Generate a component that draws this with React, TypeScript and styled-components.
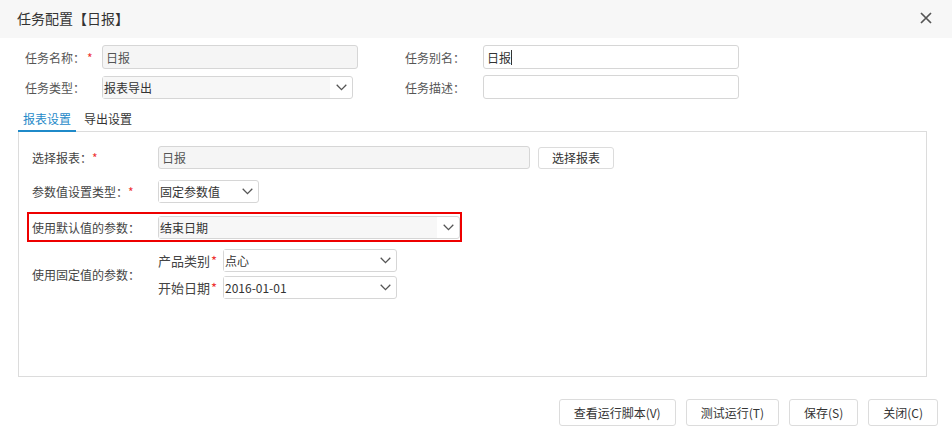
import styled, { createGlobalStyle } from "styled-components"

const GlobalStyle = createGlobalStyle`
  html, body {
    margin: 0;
    padding: 0;
    background: #ffffff;
  }
  body {
    font-family: "Noto Sans CJK SC", "Liberation Sans", sans-serif;
    font-size: 12px;
    color: #333;
  }
  * {
    box-sizing: border-box;
  }
`

function Chevron() {
  return (
    <svg width="11" height="7" viewBox="0 0 11 7">
      <polyline points="0.7,0.8 5.5,5.6 10.3,0.8" fill="none" stroke="#555" strokeWidth="1.3" />
    </svg>
  )
}

function CloseIcon() {
  return (
    <svg width="12" height="12" viewBox="0 0 12 12">
      <path d="M1 1 L11 11 M11 1 L1 11" stroke="#555" strokeWidth="1.7" />
    </svg>
  )
}

interface ComboProps {
  value: string
  width: number
  shaded?: boolean
}

function Combo(props: ComboProps) {
  return (
    <ComboBox $width={props.width}>
      <ComboText $shaded={props.shaded}>{props.value}</ComboText>
      <ComboTrigger>
        <Chevron />
      </ComboTrigger>
    </ComboBox>
  )
}

function App() {
  return (
    <Dialog>
      <GlobalStyle />
      <Header>
        <Title>任务配置【日报】</Title>
        <CloseButton>
          <CloseIcon />
        </CloseButton>
      </Header>

      <TopForm>
        <TopLabel>
          任务名称：<Star $gap={2}>*</Star>
        </TopLabel>
        <TextBox $width={256} $disabled>
          日报
        </TextBox>
        <span />
        <TopLabel>任务别名：</TopLabel>
        <TextBox $width={256}>
          日报<Caret />
        </TextBox>

        <TopLabel>任务类型：</TopLabel>
        <Combo value="报表导出" width={251} shaded />
        <span />
        <TopLabel>任务描述：</TopLabel>
        <TextBox $width={256} />
      </TopForm>

      <TabBar>
        <Tab $active>报表设置</Tab>
        <Tab>导出设置</Tab>
      </TabBar>

      <Panel>
        <FormRow>
          <RowLabel>
            选择报表：<Star>*</Star>
          </RowLabel>
          <TextBox $width={372} $disabled $height={23}>
            日报
          </TextBox>
          <Button $small>选择报表</Button>
        </FormRow>

        <FormRow>
          <RowLabel>
            参数值设置类型：<Star>*</Star>
          </RowLabel>
          <Combo value="固定参数值" width={101} />
        </FormRow>

        <Highlight>
          <RowLabel>使用默认值的参数：</RowLabel>
          <Combo value="结束日期" width={302} shaded />
        </Highlight>

        <FixedRow>
          <RowLabel>使用固定值的参数：</RowLabel>
          <ParamList>
            <ParamRow>
              <ParamLabel>
                产品类别<Star $gap={1}>*</Star>
              </ParamLabel>
              <Combo value="点心" width={174} />
            </ParamRow>
            <ParamRow>
              <ParamLabel>
                开始日期<Star $gap={1}>*</Star>
              </ParamLabel>
              <Combo value="2016-01-01" width={174} />
            </ParamRow>
          </ParamList>
        </FixedRow>
      </Panel>

      <Footer>
        <Button>查看运行脚本(V)</Button>
        <Button>测试运行(T)</Button>
        <Button>保存(S)</Button>
        <Button>关闭(C)</Button>
      </Footer>
    </Dialog>
  )
}

const Dialog = styled.div`
  width: 952px;
  height: 443px;
  background: #fff;
  display: flex;
  flex-direction: column;
`

const Header = styled.div`
  height: 38px;
  background: #f7f7f7;
  display: flex;
  align-items: center;
  justify-content: space-between;
  padding: 0 20px 2px 17px;
`

const Title = styled.div`
  font-size: 14px;
  color: #333;
`

const CloseButton = styled.div`
  display: flex;
  align-items: center;
  cursor: pointer;
`

const TopForm = styled.div`
  display: grid;
  grid-template-columns: 77px 256px 47px 78px 256px;
  row-gap: 6px;
  align-items: center;
  padding: 7px 0 0 25px;
`

const TopLabel = styled.div`
  color: #555;
  white-space: nowrap;
`

const Star = styled.span<{ $gap?: number }>`
  color: #ee3333;
  margin-left: ${(p) => p.$gap ?? 0}px;
`

const TextBox = styled.div<{ $width: number; $disabled?: boolean; $height?: number }>`
  width: ${(p) => p.$width}px;
  height: ${(p) => p.$height ?? 24}px;
  border: 1px solid #d6d6d6;
  border-radius: 3px;
  background: ${(p) => (p.$disabled ? "#f5f5f5" : "#fff")};
  color: ${(p) => (p.$disabled ? "#555" : "#333")};
  display: flex;
  align-items: center;
  padding: 0 3px;
`

const Caret = styled.span`
  display: inline-block;
  width: 1px;
  height: 15px;
  background: #333;
`

const ComboBox = styled.div<{ $width: number }>`
  width: ${(p) => p.$width}px;
  height: 23px;
  border: 1px solid #d6d6d6;
  border-radius: 3px;
  background: #fff;
  display: flex;
  align-items: stretch;
`

const ComboText = styled.div<{ $shaded?: boolean }>`
  flex: 1;
  display: flex;
  align-items: center;
  padding-left: 1px;
  background: ${(p) => (p.$shaded ? "#f7f7f7" : "#fff")};
  color: #333;
  white-space: nowrap;
`

const ComboTrigger = styled.div`
  width: 22px;
  display: flex;
  align-items: center;
  justify-content: center;
`

const TabBar = styled.div`
  display: flex;
  margin: 7px 25px 0 18px;
  height: 26px;
  border-bottom: 1px solid #dcdcdc;
`

const Tab = styled.div<{ $active?: boolean }>`
  padding: 0 5px;
  margin-right: 3px;
  display: flex;
  align-items: center;
  color: ${(p) => (p.$active ? "#1f8ac9" : "#333")};
  border-bottom: 2px solid ${(p) => (p.$active ? "#1f8ac9" : "transparent")};
  margin-bottom: -1px;
`

const Panel = styled.div`
  margin: 0 25px 0 18px;
  height: 245px;
  border: 1px solid #dcdcdc;
  border-top: none;
  padding: 14px 0 0 8px;
  display: flex;
  flex-direction: column;
`

const FormRow = styled.div`
  display: flex;
  align-items: center;
  padding-left: 5px;
  margin-bottom: 11px;
`

const RowLabel = styled.div`
  width: 126px;
  color: #444;
  white-space: nowrap;
`

const Button = styled.div<{ $small?: boolean }>`
  height: ${(p) => (p.$small ? 22 : 27)}px;
  padding: 0 ${(p) => (p.$small ? 13 : 14)}px;
  margin-left: ${(p) => (p.$small ? 8 : 0)}px;
  border: 1px solid #dcdcdc;
  border-radius: 3px;
  background: #fff;
  color: #333;
  display: flex;
  align-items: center;
  justify-content: center;
  white-space: nowrap;
  cursor: pointer;
`

const Highlight = styled.div`
  width: 435px;
  height: 30px;
  border: 2px solid #ee0000;
  display: flex;
  align-items: center;
  padding-left: 3px;
  margin-top: -2px;
`

const FixedRow = styled.div`
  display: flex;
  align-items: center;
  padding-left: 5px;
  margin-top: 7px;
`

const ParamList = styled.div`
  display: flex;
  flex-direction: column;
  gap: 4px;
`

const ParamRow = styled.div`
  display: flex;
  align-items: center;
`

const ParamLabel = styled.div`
  width: 65px;
  font-size: 13px;
  color: #444;
  white-space: nowrap;
`

const Footer = styled.div`
  display: flex;
  justify-content: flex-end;
  gap: 10px;
  padding: 22px 14px 0 0;
`

export default App
